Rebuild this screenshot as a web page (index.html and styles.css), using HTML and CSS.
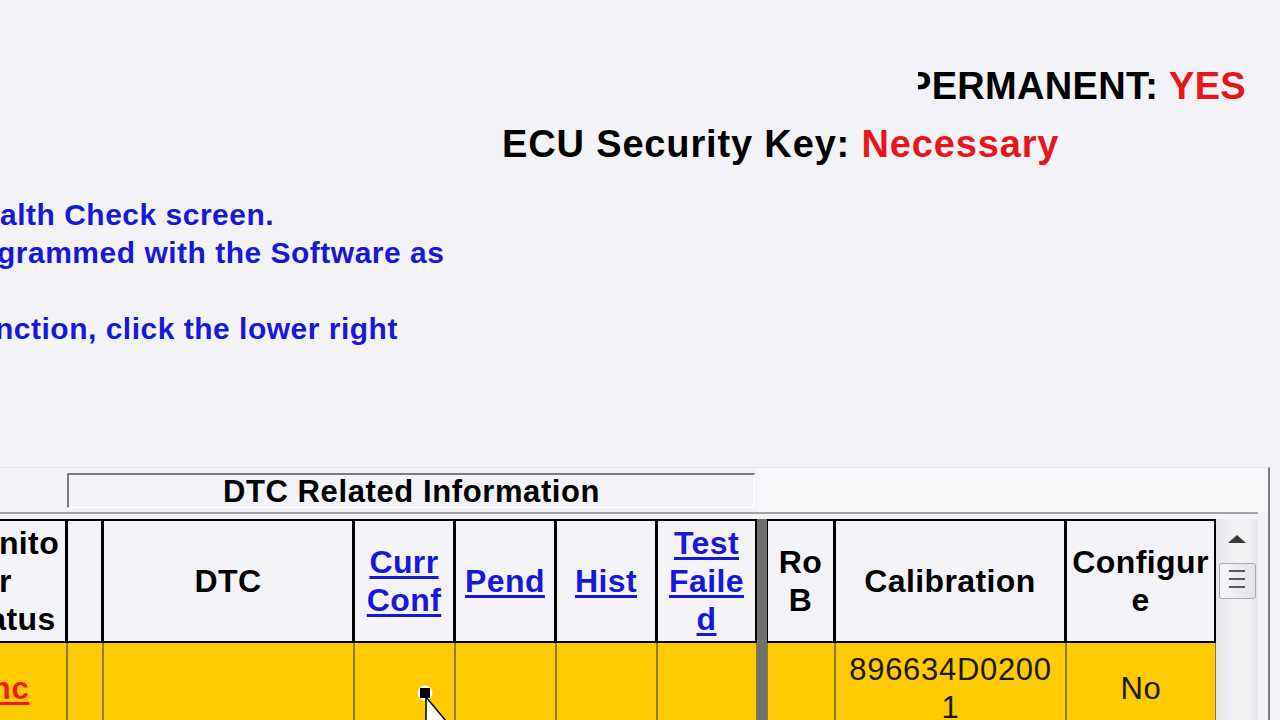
FILE: index.html
```html
<!DOCTYPE html>
<html>
<head>
<meta charset="utf-8">
<link rel="stylesheet" href="styles.css">
</head>
<body>
<div class="screen">
  <div class="perm-row">
    <div class="perm-clip"><span class="lbl">PERMANENT: </span><span class="red">YES</span></div>
  </div>
  <div class="ecu-row"><span class="lbl">ECU Security Key: </span><span class="red">Necessary</span></div>
  <div class="info">
    <div class="line l1">alth Check screen.</div>
    <div class="line l2">grammed with the Software as</div>
    <div class="line l3">&nbsp;</div>
    <div class="line l4">nction, click the lower right</div>
  </div>
  <div class="panel">
    <div class="group-row">
      <div class="group-spacer"></div>
      <div class="group-box">DTC Related Information</div>
      <div class="group-rest"></div>
    </div>
    <div class="rule"></div>
    <div class="grid">
      <div class="hc">Monito<br>r<br>Status</div>
      <div class="hc"></div>
      <div class="hc">DTC</div>
      <div class="hc"><a class="lk">Curr<br>Conf</a></div>
      <div class="hc"><a class="lk">Pend</a></div>
      <div class="hc"><a class="lk">Hist</a></div>
      <div class="hc"><a class="lk">Test<br>Faile<br>d</a></div>
      <div class="sep"></div>
      <div class="hc">Ro<br>B</div>
      <div class="hc">Calibration</div>
      <div class="hc">Configur<br>e</div>
      <div class="sb">
        <div class="sb-arrow"></div>
        <div class="sb-thumb"><span class="grip"></span><span class="grip"></span><span class="grip"></span></div>
      </div>
      <div class="dc"><a class="lk lk-red">Inc</a></div>
      <div class="dc"></div>
      <div class="dc"></div>
      <div class="dc"></div>
      <div class="dc"></div>
      <div class="dc"></div>
      <div class="dc"></div>
      <div class="dc"></div>
      <div class="dc">896634D0200<br>1</div>
      <div class="dc">No</div>
    </div>
  </div>
  <svg class="cursor" width="40" height="62" viewBox="0 0 40 62">
    <circle cx="8" cy="9" r="7.5" fill="#ffffff"/>
    <rect x="3" y="4" width="10" height="10" fill="#000000"/>
    <path d="M9 13 L9 53 L17 45 L23 59 L28 57 L22 43 L34 43 Z" fill="#ffffff" stroke="#000000" stroke-width="1.5" stroke-linejoin="miter"/>
  </svg>
</div>
</body>
</html>
```
FILE: styles.css
```css
* { box-sizing: border-box; }
body {
  margin: 0;
  background: #f3f2f6;
  font-family: "Liberation Sans", Arial, sans-serif;
}
.screen {
  position: relative;
  width: 1280px;
  height: 720px;
  overflow: hidden;
}
.red { color: #e8161c; }
.lbl { color: #000; }

.perm-row {
  display: flex;
  justify-content: flex-end;
  padding-right: 34px;
  margin-top: 64px;
  height: 44px;
}
.perm-clip {
  width: 328px;
  display: flex;
  justify-content: flex-end;
  overflow: hidden;
  white-space: pre;
  font-size: 38px;
  font-weight: bold;
  line-height: 44px;
  letter-spacing: 0.3px;
}
.ecu-row {
  margin-top: 14px;
  padding-left: 502px;
  height: 44px;
  font-size: 38px;
  font-weight: bold;
  line-height: 44px;
  letter-spacing: 0.85px;
  white-space: pre;
}
.info {
  margin-top: 30px;
  color: #1818d8;
  font-size: 30px;
  font-weight: bold;
  line-height: 38px;
  letter-spacing: 0.5px;
  white-space: nowrap;
}
.l2 { margin-left: -3px; }
.l4 { margin-left: -5px; }

.panel {
  margin-top: 119px;
  margin-left: -55px;
  width: 1325px;
  border-top: 1px solid #e4e4e8;
  border-right: 2px solid #7b7b7b;
  height: 260px;
}
.group-row {
  display: flex;
  height: 44px;
}
.group-spacer { width: 122px; }
.group-box {
  width: 688px;
  height: 35px;
  margin-top: 5px;
  border-top: 2px solid #7c7c7c;
  border-left: 2px solid #7c7c7c;
  border-right: 1px solid #ffffff;
  border-bottom: 1px solid #ffffff;
  background: #f4f3f7;
  text-align: center;
  font-size: 31px;
  font-weight: bold;
  line-height: 34px;
  letter-spacing: 0.6px;
  color: #000;
  white-space: nowrap;
}
.group-rest {
  flex: 1;
  margin-left: 2px;
  background: #f7f7f9;
}
.rule {
  height: 2px;
  margin-right: 10px;
  margin-bottom: 5px;
  background: #a3a3a3;
}
.grid {
  display: grid;
  grid-template-columns: 122px 36px 251px 101px 101px 101px 100px 10px 68px 231px 150px 42px;
  grid-template-rows: 124px 90px;
}
.hc {
  background: #f4f3f7;
  border: 2px solid #000;
  border-left-width: 1px;
  display: flex;
  align-items: center;
  justify-content: center;
  text-align: center;
  font-size: 32px;
  font-weight: bold;
  line-height: 38px;
  letter-spacing: 0.4px;
  color: #000;
  white-space: nowrap;
  overflow: hidden;
}
.lk {
  color: #1818d8;
  text-decoration: underline;
  text-decoration-thickness: 3px;
  text-underline-offset: 3px;
}
.lk-red {
  color: #ee1c1c;
  font-weight: bold;
}
.sep {
  grid-column: 8;
  grid-row: 1 / span 2;
  background: #717171;
}
.sb {
  grid-column: 12;
  grid-row: 1 / span 2;
  background: linear-gradient(to right, #e6e6ea, #f3f3f5 45%, #f3f3f5 70%, #e4e4e8);
  display: flex;
  flex-direction: column;
  align-items: center;
  padding-top: 16px;
}
.sb-arrow {
  width: 0;
  height: 0;
  border-left: 9px solid transparent;
  border-right: 9px solid transparent;
  border-bottom: 8px solid #3a3a3a;
}
.sb-thumb {
  margin-top: 20px;
  width: 37px;
  height: 36px;
  border: 1px solid #a8a8ae;
  border-radius: 3px;
  background: linear-gradient(to right, #f6f6f8, #e3e3e7);
  display: flex;
  flex-direction: column;
  align-items: center;
  justify-content: center;
  gap: 6px;
  padding-bottom: 4px;
}
.grip {
  display: block;
  width: 16px;
  height: 2px;
  background: #5a5a5e;
}
.dc {
  background: #fecb00;
  border: 1px solid #8e7b2c;
  border-top: 0;
  display: flex;
  align-items: center;
  justify-content: center;
  text-align: center;
  font-size: 31px;
  line-height: 38px;
  letter-spacing: 0.7px;
  color: #1d1a0c;
  white-space: nowrap;
  overflow: hidden;
  padding-top: 3px;
}
.cursor {
  position: absolute;
  left: 417px;
  top: 684px;
}
```
